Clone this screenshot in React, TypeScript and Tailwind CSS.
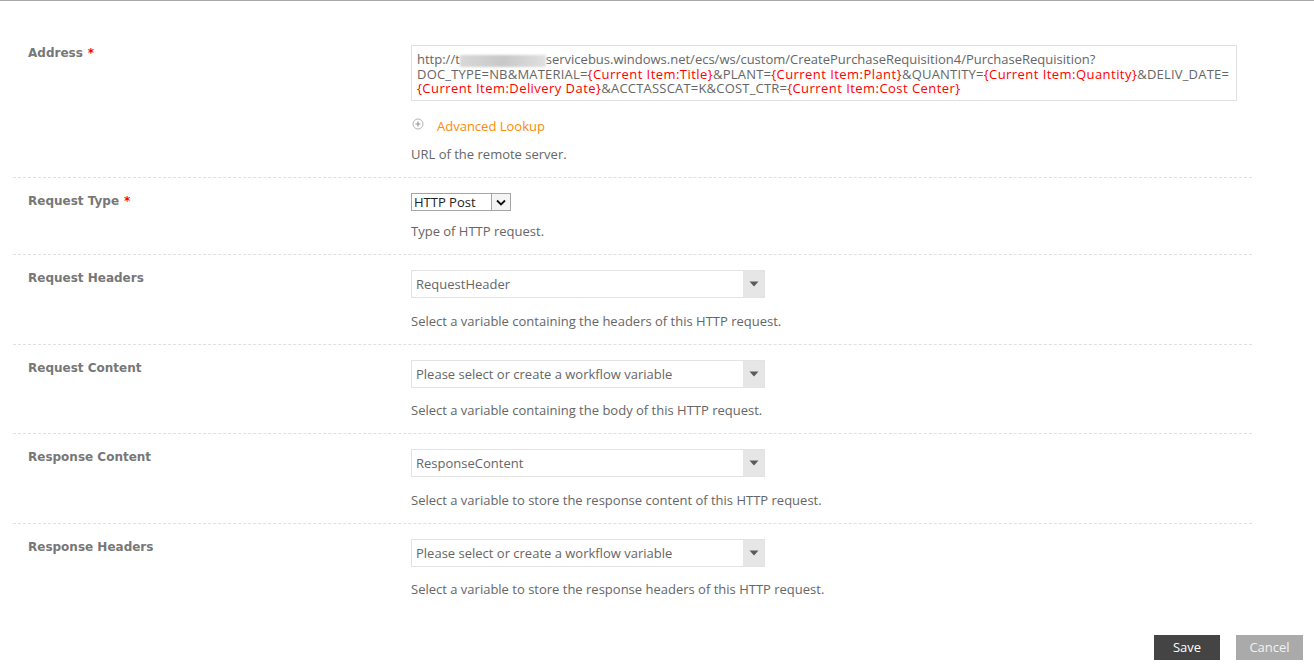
import React from "react";

const body = { fontFamily: '"Open Sans", "Liberation Sans", sans-serif' };
const lab = { fontFamily: '"DejaVu Sans", Verdana, sans-serif' };

function Label({ text, req }: { text: string; req?: boolean }) {
  return (
    <div className="w-[398px] shrink-0 pl-[15px] text-[12px] leading-[16px] font-bold text-[#777777]" style={lab}>
      {text}
      {req && <span className="text-[#ff0000] ml-[5px]">*</span>}
    </div>
  );
}

function Help({ text, mt = "mt-[15px]" }: { text: string; mt?: string }) {
  return <div className={`${mt} text-[13px] leading-[16px] text-[#666666]`}>{text}</div>;
}

function Dropdown({ value }: { value: string }) {
  return (
    <div className="flex h-[28px] w-[354px] border border-[#e3e3e3] bg-white">
      <div className="flex-1 flex items-center pl-[4px] pt-[2px] text-[13px] text-[#666666]">{value}</div>
      <div className="w-[21px] bg-[#e6e6e6] flex items-center justify-center">
        <svg width="10" height="6" viewBox="0 0 10 6">
          <path d="M0.5 0.5 L9.5 0.5 L5 5.5 Z" fill="#5a5a5a" />
        </svg>
      </div>
    </div>
  );
}

function Row({ children, first }: { children: React.ReactNode; first?: boolean }) {
  return (
    <div className={`flex ${first ? "pt-[44px]" : "pt-[15px] border-t border-dashed border-[#e0e0e0]"} pb-[15px]`}>
      {children}
    </div>
  );
}

const R = ({ children }: { children: React.ReactNode }) => (
  <span className="text-[#ff0000] tracking-[0.45px]">{children}</span>
);

export default function App() {
  return (
    <div className="w-[1314px] h-[671px] bg-white border-t border-[#a8a8a8] overflow-hidden" style={body}>
      <div className="ml-[13px] w-[1239px]">
        <Row first>
          <Label text="Address" req />
          <div>
            <div className="w-[826px] h-[56px] border border-[#e0e0e0] pl-[5px] pt-[6px] text-[13px] leading-[14.5px] text-[#666666] whitespace-nowrap">
              <div>
                http://t
                <span className="inline-block w-[86px] h-[12px] align-middle bg-gradient-to-r from-[#d8d8d8] via-[#c8c8c8] to-[#e0e0e0] blur-[1px]" />
                servicebus.windows.net/ecs/ws/custom/CreatePurchaseRequisition4/PurchaseRequisition?
              </div>
              <div className="tracking-[0.2px]">
                DOC_TYPE=NB&amp;MATERIAL=<R>{"{Current Item:Title}"}</R>&amp;PLANT=<R>{"{Current Item:Plant}"}</R>&amp;QUANTITY=<R>{"{Current Item:Quantity}"}</R>&amp;DELIV_DATE=
              </div>
              <div className="tracking-[0.2px]">
                <R>{"{Current Item:Delivery Date}"}</R>&amp;ACCTASSCAT=K&amp;COST_CTR=<R>{"{Current Item:Cost Center}"}</R>
              </div>
            </div>
            <div className="mt-[17px] flex items-center h-[16px]">
              <svg width="12" height="12" viewBox="0 0 12 12" className="ml-[1px] mt-[-4px]">
                <circle cx="6" cy="6" r="5" fill="none" stroke="#b5b5b5" strokeWidth="1" />
                <path d="M3.5 6 H8.5 M6 3.5 V8.5" stroke="#9a9a9a" strokeWidth="1.2" />
              </svg>
              <span className="ml-[13px] pt-[2px] text-[13px] text-[#ff8a00]">Advanced Lookup</span>
            </div>
            <Help text="URL of the remote server." mt="mt-[12px]" />
          </div>
        </Row>
        <Row>
          <Label text="Request Type" req />
          <div>
            <div className="flex h-[18px] w-[100px] border border-[#a5a5a5] bg-white">
              <div className="flex-1 flex items-center pl-[2px] pt-[1px] text-[13px] text-[#222222]">HTTP Post</div>
              <div className="w-[19px] border-l border-[#a5a5a5] bg-[#f4f4f4] flex items-center justify-center">
                <svg width="10" height="7" viewBox="0 0 10 7">
                  <path d="M1 1.5 L5 5.5 L9 1.5" fill="none" stroke="#111" strokeWidth="1.8" />
                </svg>
              </div>
            </div>
            <Help text="Type of HTTP request." mt="mt-[12px]" />
          </div>
        </Row>
        <Row>
          <Label text="Request Headers" />
          <div>
            <Dropdown value="RequestHeader" />
            <Help text="Select a variable containing the headers of this HTTP request." />
          </div>
        </Row>
        <Row>
          <Label text="Request Content" />
          <div>
            <Dropdown value="Please select or create a workflow variable" />
            <Help text="Select a variable containing the body of this HTTP request." mt="mt-[14px]" />
          </div>
        </Row>
        <Row>
          <Label text="Response Content" />
          <div>
            <Dropdown value="ResponseContent" />
            <Help text="Select a variable to store the response content of this HTTP request." />
          </div>
        </Row>
        <div className="flex pt-[15px] border-t border-dashed border-[#e0e0e0]">
          <Label text="Response Headers" />
          <div>
            <Dropdown value="Please select or create a workflow variable" />
            <Help text="Select a variable to store the response headers of this HTTP request." mt="mt-[14px]" />
          </div>
        </div>
      </div>
      <div className="flex justify-end gap-[16px] pr-[11px] mt-[38px]">
        <button className="w-[66px] h-[25px] bg-[#444444] text-white text-[13px]">Save</button>
        <button className="w-[67px] h-[25px] bg-[#aaaaaa] text-[#f2f2f2] text-[13px]">Cancel</button>
      </div>
    </div>
  );
}
